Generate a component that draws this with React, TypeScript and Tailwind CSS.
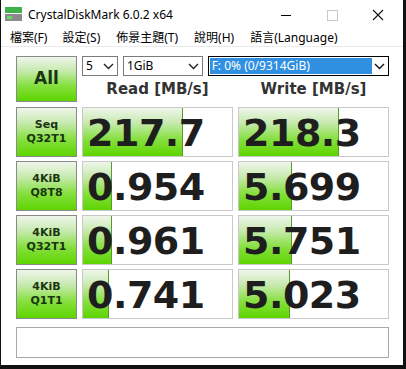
import React from "react";

const Chevron = ({ color = "#222" }: { color?: string }) => (
  <svg width="11" height="7" viewBox="0 0 11 7" className="shrink-0">
    <polyline points="1,1 5.5,5.5 10,1" fill="none" stroke={color} strokeWidth="1.4" />
  </svg>
);

const greenGrad =
  "bg-[linear-gradient(to_bottom,#eef6ea_0%,#c9eab2_30%,#86e040_65%,#5ed400_100%)]";

const rows = [
  { l1: "Seq", l2: "Q32T1", r: "217.7", w: "218.3", rp: 100, wp: 100 },
  { l1: "4KiB", l2: "Q8T8", r: "0.954", w: "5.699", rp: 29, wp: 53 },
  { l1: "4KiB", l2: "Q32T1", r: "0.961", w: "5.751", rp: 29, wp: 53 },
  { l1: "4KiB", l2: "Q1T1", r: "0.741", w: "5.023", rp: 26, wp: 51 },
];

const Value = ({ v, p }: { v: string; p: number }) => (
  <div className="relative h-[50px] border border-[#c9c9c9] bg-white overflow-hidden">
    <div
      className={`absolute left-0 top-0 bottom-0 ${greenGrad} border-r border-[#5a9a2a]`}
      style={{ width: `${p}px` }}
    />
    <div
      className="relative pl-[4px] pt-[3px] text-[38px] leading-[44px] font-bold text-[#1e1e1e] tracking-[-0.5px]"
      style={{ fontFamily: '"DejaVu Sans", Verdana, sans-serif' }}
    >
      {v}
    </div>
  </div>
);

export default function App() {
  const ui = { fontFamily: '"Noto Sans", "Noto Sans CJK TC", sans-serif' };
  const bold = { fontFamily: '"DejaVu Sans", Verdana, sans-serif' };
  return (
    <div className="w-[406px] h-[369px] bg-[#111] flex">
      <div className="ml-[1px] w-[402px] h-[365px] bg-white flex flex-col" style={ui}>
        {/* title bar */}
        <div className="h-[30px] flex items-center shrink-0">
          <svg width="18" height="16" viewBox="0 0 18 16" className="ml-[4px] mr-[5px]">
            <rect x="0" y="0" width="17" height="6" fill="#3fb04a" />
            <rect x="0" y="7" width="17" height="7" fill="#8a8a8a" />
            <rect x="2" y="9" width="5" height="3" fill="#5fe060" />
          </svg>
          <span className="text-[12px] text-black leading-none">CrystalDiskMark 6.0.2 x64</span>
          <div className="flex-1" />
          <div className="w-[46px] flex justify-center items-center">
            <div className="w-[10px] h-[1px] bg-black" />
          </div>
          <div className="w-[46px] flex justify-center items-center">
            <div className="w-[11px] h-[11px] border border-[#c8c8c8]" />
          </div>
          <div className="w-[46px] flex justify-center items-center mr-[2px]">
            <svg width="12" height="12" viewBox="0 0 12 12">
              <path d="M1 1 L11 11 M11 1 L1 11" stroke="#111" strokeWidth="1.1" />
            </svg>
          </div>
        </div>
        {/* menu bar */}
        <div className="h-[17px] flex items-center text-[12px] text-black leading-none border-b border-[#eaeaea] shrink-0">
          <span className="ml-[9px]">檔案(F)</span>
          <span className="ml-[15px]">設定(S)</span>
          <span className="ml-[16px]">佈景主題(T)</span>
          <span className="ml-[16px]">說明(H)</span>
          <span className="ml-[16px]">語言(Language)</span>
        </div>
        {/* content */}
        <div className="pl-[15px] pt-[9px] flex flex-col">
          <div className="grid grid-cols-[61px_151px_151px] gap-x-[5px]">
            <div
              className={`row-span-2 h-[46px] border border-[#8a8a8a] ${greenGrad} flex items-center justify-center text-[17px] font-bold text-[#1a3510]`}
              style={bold}
            >
              All
            </div>
            <div className="col-span-2 flex items-center h-[20px]">
              <div className="w-[36px] h-[20px] border border-[#7a7a7a] flex items-center justify-between px-[3px] text-[12px]">
                <span>5</span>
                <Chevron />
              </div>
              <div className="ml-[5px] w-[80px] h-[20px] border border-[#7a7a7a] flex items-center justify-between px-[3px] text-[12px]">
                <span>1GiB</span>
                <Chevron />
              </div>
              <div className="ml-[5px] w-[182px] h-[20px] border border-black flex items-center p-[1px] text-[12px]">
                <div className="h-full w-[162px] bg-[#2f8fe0] text-white flex items-center pl-[2px]">
                  F: 0% (0/9314GiB)
                </div>
                <div className="flex-1 flex justify-center">
                  <Chevron color="#111" />
                </div>
              </div>
            </div>
            <div
              className="h-[26px] flex items-center justify-center text-[15px] font-bold text-[#333]"
              style={bold}
            >
              Read [MB/s]
            </div>
            <div
              className="h-[26px] flex items-center justify-center text-[15px] font-bold text-[#333]"
              style={bold}
            >
              Write [MB/s]
            </div>
          </div>
          <div className="mt-[5px] grid grid-cols-[61px_151px_151px] gap-x-[5px] gap-y-[4px]">
            {rows.map((r, i) => (
              <React.Fragment key={i}>
                <div
                  className={`h-[50px] border border-[#8a8a8a] ${greenGrad} flex flex-col items-center justify-center text-[11px] leading-[14px] font-bold text-[#1a3510]`}
                  style={bold}
                >
                  <span>{r.l1}</span>
                  <span>{r.l2}</span>
                </div>
                <Value v={r.r} p={r.rp} />
                <Value v={r.w} p={r.wp} />
              </React.Fragment>
            ))}
          </div>
          <div className="mt-[8px] w-[373px] h-[31px] border border-[#a8a8a8] bg-white" />
        </div>
      </div>
    </div>
  );
}
